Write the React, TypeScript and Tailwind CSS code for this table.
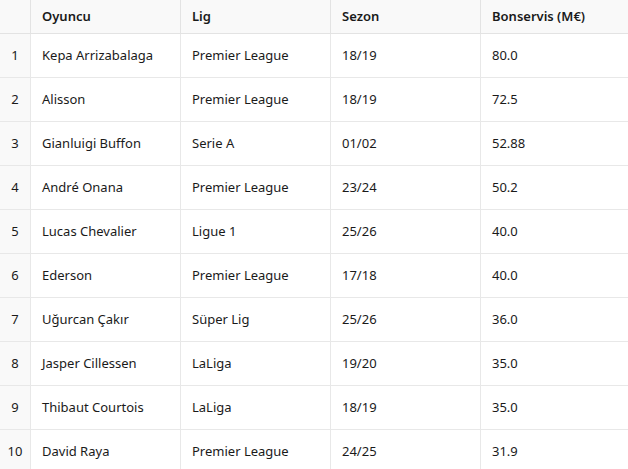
import React from "react";

const rows = [
  ["Kepa Arrizabalaga", "Premier League", "18/19", "80.0"],
  ["Alisson", "Premier League", "18/19", "72.5"],
  ["Gianluigi Buffon", "Serie A", "01/02", "52.88"],
  ["André Onana", "Premier League", "23/24", "50.2"],
  ["Lucas Chevalier", "Ligue 1", "25/26", "40.0"],
  ["Ederson", "Premier League", "17/18", "40.0"],
  ["Uğurcan Çakır", "Süper Lig", "25/26", "36.0"],
  ["Jasper Cillessen", "LaLiga", "19/20", "35.0"],
  ["Thibaut Courtois", "LaLiga", "18/19", "35.0"],
  ["David Raya", "Premier League", "24/25", "31.9"],
];

const headers = ["Oyuncu", "Lig", "Sezon", "Bonservis (M€)"];

export default function App() {
  return (
    <div
      className="w-[628px] h-[469px] overflow-hidden bg-white text-[13px] text-[#1a1a1a]"
      style={{ fontFamily: '"Noto Sans", "Open Sans", sans-serif' }}
    >
      <div className="grid grid-cols-[31px_150px_150px_150px_1fr]">
        <div className="h-[34px] bg-[#f9f9f9] border-b border-r border-[#e3e3e3]" />
        {headers.map((h, i) => (
          <div
            key={h}
            className={`h-[34px] flex items-center pl-[11px] pr-3 font-semibold bg-[#f9f9f9] border-b border-[#e3e3e3] ${
              i < 3 ? "border-r" : ""
            }`}
          >
            {h}
          </div>
        ))}
        {rows.map((r, idx) => (
          <React.Fragment key={idx}>
            <div className="h-[44px] flex items-center justify-center bg-[#f9f9f9] border-b border-r border-[#e8e8e8]">
              {idx + 1}
            </div>
            {r.map((c, i) => (
              <div
                key={i}
                className={`h-[44px] flex items-center pl-[11px] pr-3 border-b border-[#e8e8e8] ${
                  i < 3 ? "border-r" : ""
                }`}
              >
                {c}
              </div>
            ))}
          </React.Fragment>
        ))}
      </div>
    </div>
  );
}
